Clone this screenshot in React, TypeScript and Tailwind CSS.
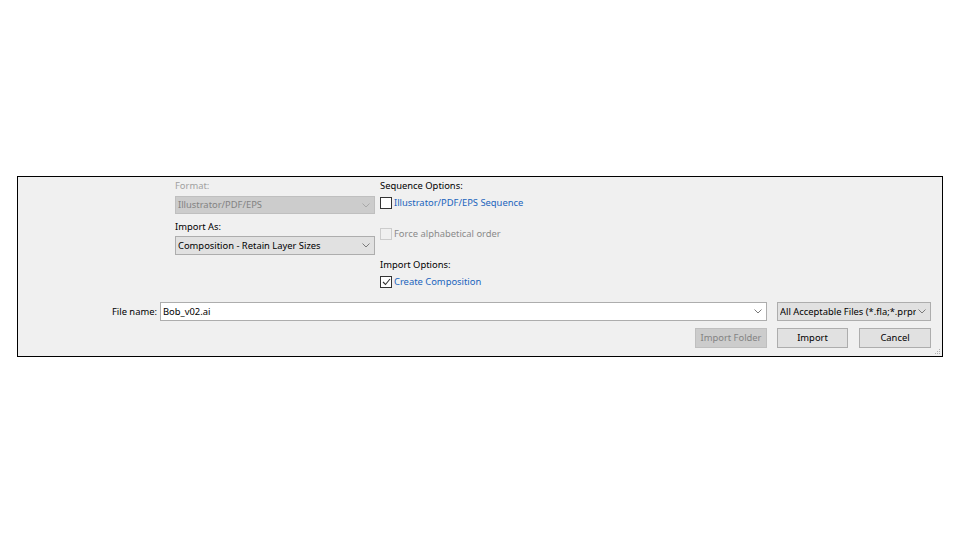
import React from 'react';

function Chevron({ color = '#606060' }: { color?: string }) {
  return (
    <svg width="8" height="5" viewBox="0 0 8 5" className="shrink-0">
      <path d="M0.5 0.5 L4 4 L7.5 0.5" fill="none" stroke={color} strokeWidth="1" />
    </svg>
  );
}

function Check({ checked, disabled }: { checked?: boolean; disabled?: boolean }) {
  return (
    <span
      className={`w-[12px] h-[12px] border flex items-center justify-center shrink-0 ${
        disabled ? 'border-[#cccccc] bg-[#f0f0f0]' : 'border-[#333333] bg-white'
      }`}
    >
      {checked && (
        <svg width="9" height="8" viewBox="0 0 9 8">
          <path d="M1 4 L3.5 6.5 L8 1" fill="none" stroke="#333333" strokeWidth="1.1" />
        </svg>
      )}
    </span>
  );
}

export default function App() {
  return (
    <div
      className="w-[960px] h-[540px] bg-white pt-[176px] pl-[17px] text-[9.4px] leading-[14px] text-black"
      style={{ fontFamily: '"Noto Sans", "Open Sans", sans-serif' }}
    >
      <div className="w-[926px] h-[181px] border border-black bg-[#f0f0f0] relative">
        <div className="flex pl-[157px] pt-[2px]">
          <div className="w-[200px] flex flex-col">
            <div className="h-[15px] text-[#a0a0a0]">Format:</div>
            <div className="mt-[2px] h-[18px] border border-[#bfbfbf] bg-[#cccccc] flex items-center justify-between px-[2px] text-[#838383]">
              <span>Illustrator/PDF/EPS</span>
              <span className="mr-[2px]">
                <Chevron color="#a8a8a8" />
              </span>
            </div>
            <div className="h-[15px] mt-[6px]">Import As:</div>
            <div className="mt-[1px] h-[19px] border border-[#adadad] bg-[#e1e1e1] flex items-center justify-between px-[2px]">
              <span>Composition - Retain Layer Sizes</span>
              <span className="mr-[2px]">
                <Chevron color="#7a7a7a" />
              </span>
            </div>
          </div>
          <div className="ml-[5px] flex flex-col">
            <div className="h-[15px]">Sequence Options:</div>
            <div className="mt-[2px] h-[14px] flex items-center gap-[2px]">
              <Check />
              <span className="text-[#1a64bd]">Illustrator/PDF/EPS Sequence</span>
            </div>
            <div className="mt-[17px] h-[14px] flex items-center gap-[2px]">
              <Check disabled />
              <span className="text-[#8a8a8a]">Force alphabetical order</span>
            </div>
            <div className="mt-[17px] h-[15px]">Import Options:</div>
            <div className="mt-[2px] h-[14px] flex items-center gap-[2px]">
              <Check checked />
              <span className="text-[#1a64bd]">Create Composition</span>
            </div>
          </div>
        </div>
        <div className="flex items-center mt-[13px]">
          <span className="w-[139px] mr-[3px] text-right">File name:</span>
          <div className="w-[607px] h-[19px] border border-[#adadad] bg-white flex items-center justify-between pl-[2px] pr-[4px]">
            <span>Bob_v02.ai</span>
            <Chevron color="#7a7a7a" />
          </div>
          <div className="ml-[10px] w-[154px] h-[19px] border border-[#adadad] bg-[#e1e1e1] flex items-center justify-between pl-[2px] pr-[4px] overflow-hidden">
            <span className="whitespace-nowrap overflow-hidden w-[136px]">All Acceptable Files (*.fla;*.prproj</span>
            <Chevron color="#7a7a7a" />
          </div>
        </div>
        <div className="flex justify-end mt-[7px] pr-[11px] gap-[10px] whitespace-nowrap">
          <div className="w-[72px] h-[20px] border border-[#bfbfbf] bg-[#cccccc] text-[#838383] flex items-center justify-center">
            Import Folder
          </div>
          <div className="w-[71px] h-[20px] border border-[#adadad] bg-[#e1e1e1] flex items-center justify-center">
            Import
          </div>
          <div className="ml-[1px] w-[72px] h-[20px] border border-[#adadad] bg-[#e1e1e1] flex items-center justify-center">
            Cancel
          </div>
        </div>
        <svg width="6" height="6" viewBox="0 0 6 6" className="absolute right-[1px] bottom-[1px]">
          <rect x="4" y="0" width="1" height="1" fill="#b0b0b0" />
          <rect x="2" y="2" width="1" height="1" fill="#b0b0b0" />
          <rect x="4" y="2" width="1" height="1" fill="#b0b0b0" />
          <rect x="0" y="4" width="1" height="1" fill="#b0b0b0" />
          <rect x="2" y="4" width="1" height="1" fill="#b0b0b0" />
          <rect x="4" y="4" width="1" height="1" fill="#b0b0b0" />
        </svg>
      </div>
    </div>
  );
}
